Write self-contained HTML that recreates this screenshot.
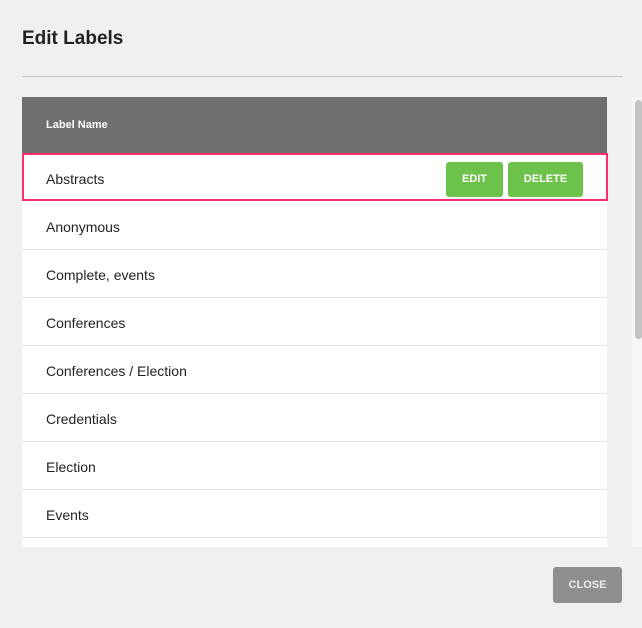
<!DOCTYPE html>
<html><head><style>
body{margin:0;width:642px;height:628px;background:#f0f0f0;font-family:"Liberation Sans",sans-serif;position:relative;overflow:hidden;color:#222}
h1{position:absolute;left:22px;top:28px;margin:0;font-size:19px;font-weight:bold;color:#222}
.hr{position:absolute;left:22px;top:76px;width:600px;height:1px;background:#c4c4c4}
.tbl{position:absolute;left:22px;top:97px;width:585px;height:450px;background:#fff;overflow:hidden}
.hd{height:56px;background:#6f6f6f;color:#fff;font-size:11px;font-weight:bold;line-height:56px;padding-left:24px}
.row{height:47px;border-bottom:1px solid #e4e4e4;line-height:50px;padding-left:24px;font-size:14px;position:relative}
.sel{position:absolute;left:22px;top:153px;width:582px;height:44px;border:2px solid #ff2d6e;background:#fff;font-size:14px;line-height:46px}
.sel span{position:absolute;left:22px;top:1px}
.btn{position:absolute;top:7px;height:35px;background:#6cc24a;color:#fff;font-size:11px;font-weight:bold;border-radius:3px;text-align:center;line-height:35px}
.track{position:absolute;left:632px;top:97px;width:10px;height:450px;background:#f7f7f7}
.thumb{position:absolute;left:635px;top:100px;width:7px;height:239px;background:#c4c4c4;border-radius:4px}
.close{position:absolute;left:553px;top:567px;width:69px;height:36px;background:#8f8f8f;border-radius:3px;color:#ececec;font-size:11px;font-weight:bold;text-align:center;line-height:36px}
</style></head><body>
<h1>Edit Labels</h1>
<div class="hr"></div>
<div class="tbl">
<div class="hd">Label Name</div>
<div class="row" style="height:49px;border:none"></div>
<div class="row">Anonymous</div>
<div class="row">Complete, events</div>
<div class="row">Conferences</div>
<div class="row">Conferences / Election</div>
<div class="row">Credentials</div>
<div class="row">Election</div>
<div class="row">Events</div>
<div class="row"></div>
</div>
<div class="sel"><span>Abstracts</span>
<div class="btn" style="left:422px;width:57px">EDIT</div>
<div class="btn" style="left:484px;width:75px">DELETE</div>
</div>
<div class="track"></div><div class="thumb"></div>
<div class="close">CLOSE</div>
</body></html>
